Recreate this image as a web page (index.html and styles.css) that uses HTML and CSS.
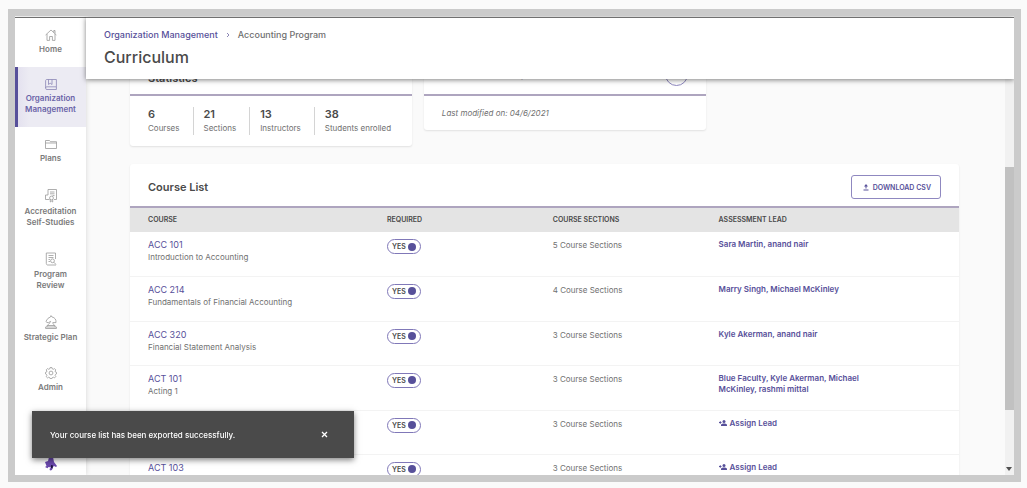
FILE: index.html
```html
<!DOCTYPE html>
<html lang="en">
<head>
    <meta charset="UTF-8">
    <meta name="viewport" content="width=device-width, initial-scale=1.0">
    <title>Curriculum</title>
    <link rel="stylesheet" href="styles.css">
</head>
<body>

    <div class="app">

      <nav class="sidebar">
        <a href="#" class="nav-item">
          <svg width="12" height="12" viewBox="0 0 12 12"><path d="M.6 6 6 1l5.400 5M2 5v6.400h2.600V7.500h2.800v3.900H10V5M8.800 3.400V1.500H10v3"/></svg>
          <span>Home</span>
        </a>
        <a href="#" class="nav-item active">
          <svg width="12" height="11" viewBox="0 0 12 11"><path d="M11.400 7.800V.5H2C1 .5.600 1 .600 1.800v7.500c0 .8.500 1.200 1.400 1.200h9.400V7.800H2C1 7.800.6 8.300.6 9M3.500.5v5l1.700-1.300L7 5.500v-5"/></svg>
          <span>Organization Management</span>
        </a>
        <a href="#" class="nav-item">
          <svg width="12" height="11" viewBox="0 0 12 11"><path d="M.5 9.500v-8h4l1 1.200h6v6.800zM.5 4h11"/></svg>
          <span>Plans</span>
        </a>
        <a href="#" class="nav-item">
          <svg width="12" height="15" viewBox="0 0 12 15"><path d="M3 7V1.500h8.500v10H9M5 4h4.500M5 5.800h4.500M7.500 7.600h2M3 7H.5v4.500h4"/><circle cx="6.500" cy="10" r="1.900"/><path d="M5.300 11.500V14l1.200-.8 1.200.8v-2.500"/></svg>
          <span>Accreditation Self-Studies</span>
        </a>
        <a href="#" class="nav-item">
          <svg width="12" height="14" viewBox="0 0 12 14"><path d="M10.500 7V1H1.300v10.500c0 1 .7 1.500 1.500 1.500h8.200M3.500 3.500h5M3.500 5.500h5M3.500 7.500H5M3.500 9.500H5"/><circle cx="7.500" cy="8.800" r="1.900"/><path d="m9 10.300 2 2.200"/></svg>
          <span>Program Review</span>
        </a>
        <a href="#" class="nav-item">
          <svg width="12" height="14" viewBox="0 0 12 14"><path d="M.6 13.500V12h10.800v1.500zM2 12v-1.500h8V12M3 10.500C3 8.500 5.500 8.200 5.600 6.400L3.500 7.600 1.800 7.500 1 6.200 3 3.300 5.500 2 6 .6 7 2c3 .5 4.300 2.800 4 5.600H7.800c0 1.500 1.200 1.500 1.200 2.900"/></svg>
          <span>Strategic Plan</span>
        </a>
        <a href="#" class="nav-item">
          <svg width="12" height="12" viewBox="0 0 12 12"><path d="M5 .6h2l.3 1.300 1 .4 1.200-.7 1.300 1.300-.7 1.200.4 1 1 .3v1.500l-1 .5-.4 1 .7 1.200-1.300 1.300-1.200-.7-1 .4-.3 1H5l-.3-1-1-.4-1.200.7-1.300-1.300.7-1.200-.4-1-1-.5V5.400l1-.3.4-1-.7-1.200 1.300-1.300 1.200.7 1-.4z"/><circle cx="6" cy="6" r="1.900"/></svg>
          <span>Admin</span>
        </a>
        <a href="#" class="brand" aria-label="Account">
          <svg width="14" height="14" viewBox="0 0 14 14"><path fill="#6a48ad" d="M5 0h4l1 5 3 4-1 1-2-1-1 1-1 3-2 .5L5.500 12 7 10.500 4.500 10l-1 1.200L1 10l1.500-1L1 5l3-1z"/><path fill="#1d1240" d="m7 8 2 .5-.5 3L7 11z"/></svg>
        </a>
      </nav>

      <div class="main">
        <header class="page-header">
          <div class="breadcrumb">
            <a href="#">Organization Management</a>
            <svg width="4" height="6" viewBox="0 0 4 6"><path d="m1 1 2 2-2 2"/></svg>
            <span>Accounting Program</span>
          </div>
          <h1>Curriculum</h1>
        </header>

        <div class="scroll-area">
          <div class="content">

            <div class="cards">
              <section class="card">
                <div class="card-head"><h2>Statistics</h2></div>
                <div class="stats">
                  <div class="stat"><strong>6</strong><span>Courses</span></div>
                  <div class="stat"><strong>21</strong><span>Sections</span></div>
                  <div class="stat"><strong>13</strong><span>Instructors</span></div>
                  <div class="stat"><strong>38</strong><span>Students enrolled</span></div>
                </div>
              </section>
              <section class="card">
                <div class="card-head map-head">
                  <h2>Curriculum Map</h2>
                  <button class="round-btn" aria-label="Open map"></button>
                </div>
                <p class="modified">Last modified on: 04/6/2021</p>
              </section>
            </div>

            <section class="card course-list">
              <div class="card-head">
                <h2>Course List</h2>
                <button class="download">
                  <svg width="6" height="7" viewBox="0 0 6 7"><path d="M3 0 1 2.500h1.500v2h1v-2H5zM.5 5.500h5v1h-5z"/></svg>
                  DOWNLOAD CSV
                </button>
              </div>
              <table>
                <thead>
                  <tr>
                    <th class="col-course">COURSE</th>
                    <th class="col-mid">REQUIRED</th>
                    <th class="col-mid">COURSE SECTIONS</th>
                    <th>ASSESSMENT LEAD</th>
                  </tr>
                </thead>
                <tbody>
                  <tr>
                    <td><a href="#" class="code">ACC 101</a>Introduction to Accounting</td>
                    <td><label class="toggle">YES<input type="checkbox" checked></label></td>
                    <td>5 Course Sections</td>
                    <td><a href="#" class="lead">Sara Martin, anand nair</a></td>
                  </tr>
                  <tr>
                    <td><a href="#" class="code">ACC 214</a>Fundamentals of Financial Accounting</td>
                    <td><label class="toggle">YES<input type="checkbox" checked></label></td>
                    <td>4 Course Sections</td>
                    <td><a href="#" class="lead">Marry Singh, Michael McKinley</a></td>
                  </tr>
                  <tr>
                    <td><a href="#" class="code">ACC 320</a>Financial Statement Analysis</td>
                    <td><label class="toggle">YES<input type="checkbox" checked></label></td>
                    <td>3 Course Sections</td>
                    <td><a href="#" class="lead">Kyle Akerman, anand nair</a></td>
                  </tr>
                  <tr>
                    <td><a href="#" class="code">ACT 101</a>Acting 1</td>
                    <td><label class="toggle">YES<input type="checkbox" checked></label></td>
                    <td>3 Course Sections</td>
                    <td><a href="#" class="lead">Blue Faculty, Kyle Akerman, Michael McKinley, rashmi mittal</a></td>
                  </tr>
                  <tr>
                    <td></td>
                    <td><label class="toggle">YES<input type="checkbox" checked></label></td>
                    <td>3 Course Sections</td>
                    <td><a href="#" class="lead"><svg width="8" height="6" viewBox="0 0 8 6"><circle cx="5" cy="1.500" r="1.500"/><path d="M2 6V5c0-2 6-2 6 0v1zM0 2h2.500v1H0zM.8 1.200h1v2.600h-1z"/></svg>Assign Lead</a></td>
                  </tr>
                  <tr>
                    <td><a href="#" class="code">ACT 103</a></td>
                    <td><label class="toggle">YES<input type="checkbox" checked></label></td>
                    <td>3 Course Sections</td>
                    <td><a href="#" class="lead"><svg width="8" height="6" viewBox="0 0 8 6"><circle cx="5" cy="1.500" r="1.500"/><path d="M2 6V5c0-2 6-2 6 0v1zM0 2h2.500v1H0zM.8 1.200h1v2.600h-1z"/></svg>Assign Lead</a></td>
                  </tr>
                </tbody>
              </table>
            </section>

          </div>

          <div class="scrollbar">
            <div class="track"><div class="thumb"></div></div>
            <svg width="8" height="12" viewBox="0 0 8 12"><path d="M1 4h6L4 8z"/></svg>
          </div>
        </div>
      </div>
    </div>

    <div class="toast" role="status">
      <span>Your course list has been exported successfully.</span>
      <button aria-label="Close">
        <svg width="7" height="7" viewBox="0 0 7 7"><path d="m1 1 5 5M6 1 1 6"/></svg>
      </button>
    </div>

</body>
</html>
```
FILE: styles.css
```css
:root {
  --purple: #57509a;
  --text: #4a4a4a;
  --muted: #707070;
  --line: #aea5bf;
}

* {
  box-sizing: border-box;
}

body {
  margin: 0;
  padding: 9px 6px 6px 8px;
  height: 100vh;
  overflow: hidden;
  background: #fafafa;
  font-family: Inter, "Liberation Sans", sans-serif;
  font-size: 8px;
  line-height: 12px;
  color: var(--muted);
}

a {
  color: var(--purple);
  text-decoration: none;
}

h1, h2, p {
  margin: 0;
}

button {
  font-family: inherit;
  background: transparent;
  cursor: pointer;
}

.app {
  display: flex;
  height: 100%;
  padding-top: 1px;
  border: 7px solid #cbcbcb;
  overflow: hidden;
}

/* sidebar */
.sidebar {
  flex: 0 0 71px;
  background: #fff;
  border-top: 1px solid #707070;
  box-shadow: 0 0 5px rgba(0, 0, 0, 0.15);
}

.nav-item {
  display: flex;
  flex-direction: column;
  align-items: center;
  gap: 3px;
  padding: 12px 6px;
  font-size: 8px;
  font-weight: 600;
  line-height: 11px;
  text-align: center;
  color: #7a7a7a;
}

.nav-item:first-child {
  padding-top: 11px;
}

.nav-item svg {
  fill: none;
  stroke: #999;
  stroke-width: 0.8;
}

.nav-item.active {
  color: #6a63a8;
  background: linear-gradient(to right, #e2dfee, #ecebf3 20%);
  box-shadow: inset 3px 0 0 var(--purple);
}

.nav-item.active svg {
  stroke: #8c87b5;
}

.brand {
  display: flex;
  justify-content: center;
  padding: 52px 0 0;
}

/* header */
.main {
  flex: 1;
  min-width: 0;
  display: flex;
  flex-direction: column;
}

.page-header {
  position: relative;
  z-index: 2;
  padding: 10px 18px;
  background: #fff;
  border-top: 1px solid #707070;
  box-shadow: 0 1px 5px rgba(0, 0, 0, 0.5);
}

.breadcrumb {
  display: flex;
  align-items: center;
  gap: 8px;
  font-size: 9px;
  font-weight: 500;
  line-height: 14px;
}

.breadcrumb svg {
  fill: none;
  stroke: #8c87b5;
}

h1 {
  margin-top: 3px;
  font-size: 16px;
  font-weight: 500;
  line-height: 24px;
  color: var(--text);
}

/* content, scrolled under the header */
.scroll-area {
  flex: 1;
  min-height: 0;
  display: flex;
}

.content {
  flex: 1;
  margin-top: -22px;
  padding: 0 46px 0 44px;
}

.cards {
  display: flex;
  align-items: flex-start;
  gap: 12px;
}

.card {
  width: 34%;
  background: #fff;
  border-radius: 3px;
  box-shadow: 0 1px 2px rgba(0, 0, 0, 0.1);
}

.card-head {
  display: flex;
  align-items: center;
  justify-content: space-between;
  height: 39px;
  padding: 4px 18px 0;
  border-bottom: 2px solid var(--line);
}

h2 {
  font-size: 11px;
  font-weight: 600;
  line-height: 14px;
  color: var(--text);
}

.map-head {
  align-items: flex-start;
  padding-top: 6px;
}

.map-head h2 {
  line-height: 20px;
}

.round-btn {
  width: 23px;
  height: 23px;
  border: 1px solid #8f88c0;
  border-radius: 50%;
}

.stats {
  display: flex;
  padding: 11px 0 11px 8px;
}

.stat {
  display: flex;
  flex-direction: column;
  padding: 0 13px 0 10px;
  line-height: 14px;
}

.stat:last-child {
  padding-right: 0;
}

.stat + .stat {
  border-left: 1px solid #d4d4d4;
}

.stat strong {
  font-size: 11px;
  font-weight: 600;
  color: var(--text);
}

.modified {
  padding: 11px 18px;
  font-style: italic;
}

/* course list */
.course-list {
  width: auto;
  margin-top: 18px;
}

.course-list .card-head {
  height: 44px;
}

.download {
  display: flex;
  align-items: center;
  gap: 4px;
  height: 24px;
  padding: 0 9px 0 11px;
  border: 1px solid #8f88c0;
  border-radius: 3px;
  font-size: 7px;
  font-weight: 600;
  color: var(--purple);
}

.download svg {
  fill: var(--purple);
}

table {
  width: 100%;
  table-layout: fixed;
  border-collapse: collapse;
}

th {
  height: 24px;
  padding: 0;
  background: #e4e4e4;
  font-size: 7px;
  font-weight: 600;
  text-align: left;
  color: var(--text);
}

.col-course {
  width: 31%;
}

.col-mid {
  width: 20%;
}

td {
  height: 44px;
  padding: 7px 0 0;
  border-bottom: 1px solid #f3f3f3;
  vertical-align: top;
}

tr:nth-child(even) td {
  height: 45px;
}

th:first-child,
td:first-child {
  padding-left: 18px;
}

td:last-child {
  padding-right: 80px;
}

.code {
  display: block;
  font-size: 9px;
}

.lead {
  display: block;
  font-weight: 600;
  line-height: 11px;
}

.lead svg {
  margin-right: 3px;
  fill: var(--purple);
}

.toggle {
  display: inline-flex;
  align-items: center;
  gap: 2px;
  height: 15px;
  padding: 0 4px;
  border: 1px solid #8078b8;
  border-radius: 8px;
  font-size: 7px;
  font-weight: 600;
  line-height: 13px;
  color: var(--text);
}

.toggle input {
  appearance: none;
  width: 8px;
  height: 8px;
  margin: 0;
  border-radius: 50%;
  background: var(--purple);
}

/* scrollbar */
.scrollbar {
  display: flex;
  flex-direction: column;
  width: 9px;
  background: #f1f1f1;
}

.track {
  flex: 1;
  padding-top: 88px;
}

.thumb {
  height: 82%;
  background: #c1c1c1;
}

.scrollbar svg {
  fill: #505050;
}

/* toast */
.toast {
  position: fixed;
  left: 32px;
  bottom: 30px;
  z-index: 10;
  display: flex;
  align-items: center;
  justify-content: space-between;
  width: 322px;
  height: 47px;
  padding: 0 26px 0 18px;
  background: #4a4a4a;
  box-shadow: 0 2px 6px rgba(0, 0, 0, 0.5);
  font-weight: 500;
  color: #fff;
}

.toast button {
  display: flex;
  padding: 0;
  border: 0;
}

.toast svg {
  stroke: #fff;
  stroke-width: 1.3;
}
```
